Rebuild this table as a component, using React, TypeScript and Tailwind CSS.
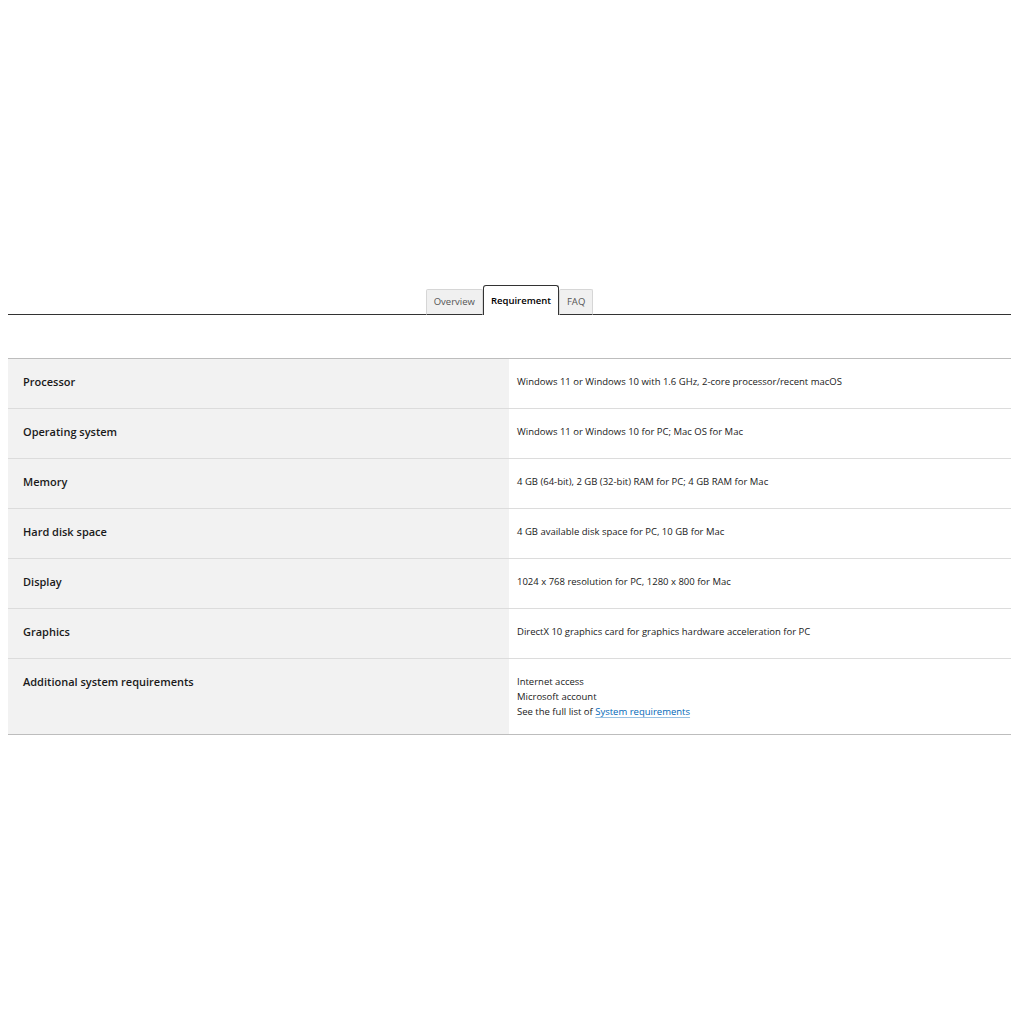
import React from 'react';

const rows: { label: string; value: React.ReactNode }[] = [
  { label: 'Processor', value: 'Windows 11 or Windows 10 with 1.6 GHz, 2-core processor/recent macOS' },
  { label: 'Operating system', value: 'Windows 11 or Windows 10 for PC; Mac OS for Mac' },
  { label: 'Memory', value: '4 GB (64-bit), 2 GB (32-bit) RAM for PC; 4 GB RAM for Mac' },
  { label: 'Hard disk space', value: '4 GB available disk space for PC, 10 GB for Mac' },
  { label: 'Display', value: '1024 x 768 resolution for PC, 1280 x 800 for Mac' },
  { label: 'Graphics', value: 'DirectX 10 graphics card for graphics hardware acceleration for PC' },
  {
    label: 'Additional system requirements',
    value: (
      <div className="flex flex-col gap-[3px]">
        <span>Internet access</span>
        <span>Microsoft account</span>
        <span>
          See the full list of{' '}
          <a href="#" className="text-[#0067b8] underline decoration-[#0067b8]/40 underline-offset-2">
            System requirements
          </a>
        </span>
      </div>
    ),
  },
];

const tabs = ['Overview', 'Requirement', 'FAQ'];

export default function App() {
  return (
    <div className="min-h-[1024px] bg-white pl-2 pr-[13px] pt-[285px] font-['Open_Sans',sans-serif] text-[#1a1a1a]">
      <div className="flex justify-center border-b border-[#333]">
        <div className="-mb-px flex items-end">
          {tabs.map(tab =>
            tab === 'Requirement' ? (
              <div
                key={tab}
                className="flex h-[30px] items-center rounded-t-[3px] border border-b-0 border-[#333] bg-white px-[7px] pt-[2px] text-[9.5px] font-semibold text-black"
              >
                {tab}
              </div>
            ) : (
              <div
                key={tab}
                className="flex h-[26px] items-center rounded-t-[2px] border border-b-[#333] border-[#d6d6d6] bg-[#f0f0f0] px-[7px] text-[9.5px] text-[#555]"
              >
                {tab}
              </div>
            )
          )}
        </div>
      </div>

      <div className="mt-[43px] border-y border-[#bdbdbd]">
        {rows.map((row, i) => (
          <div
            key={row.label}
            className={`grid grid-cols-[501px_1fr] ${i > 0 ? 'border-t border-[#dcdcdc]' : ''}`}
          >
            <div className="bg-[#f2f2f2] px-[15px] pt-[15px] pb-[18px] text-[11px] font-semibold leading-[16px]">
              {row.label}
            </div>
            <div className={`px-2 pt-[17px] text-[9.5px] leading-[12px] ${i === rows.length - 1 ? 'pb-[16px]' : 'pb-[17px]'}`}>
              {row.value}
            </div>
          </div>
        ))}
      </div>
    </div>
  );
}
